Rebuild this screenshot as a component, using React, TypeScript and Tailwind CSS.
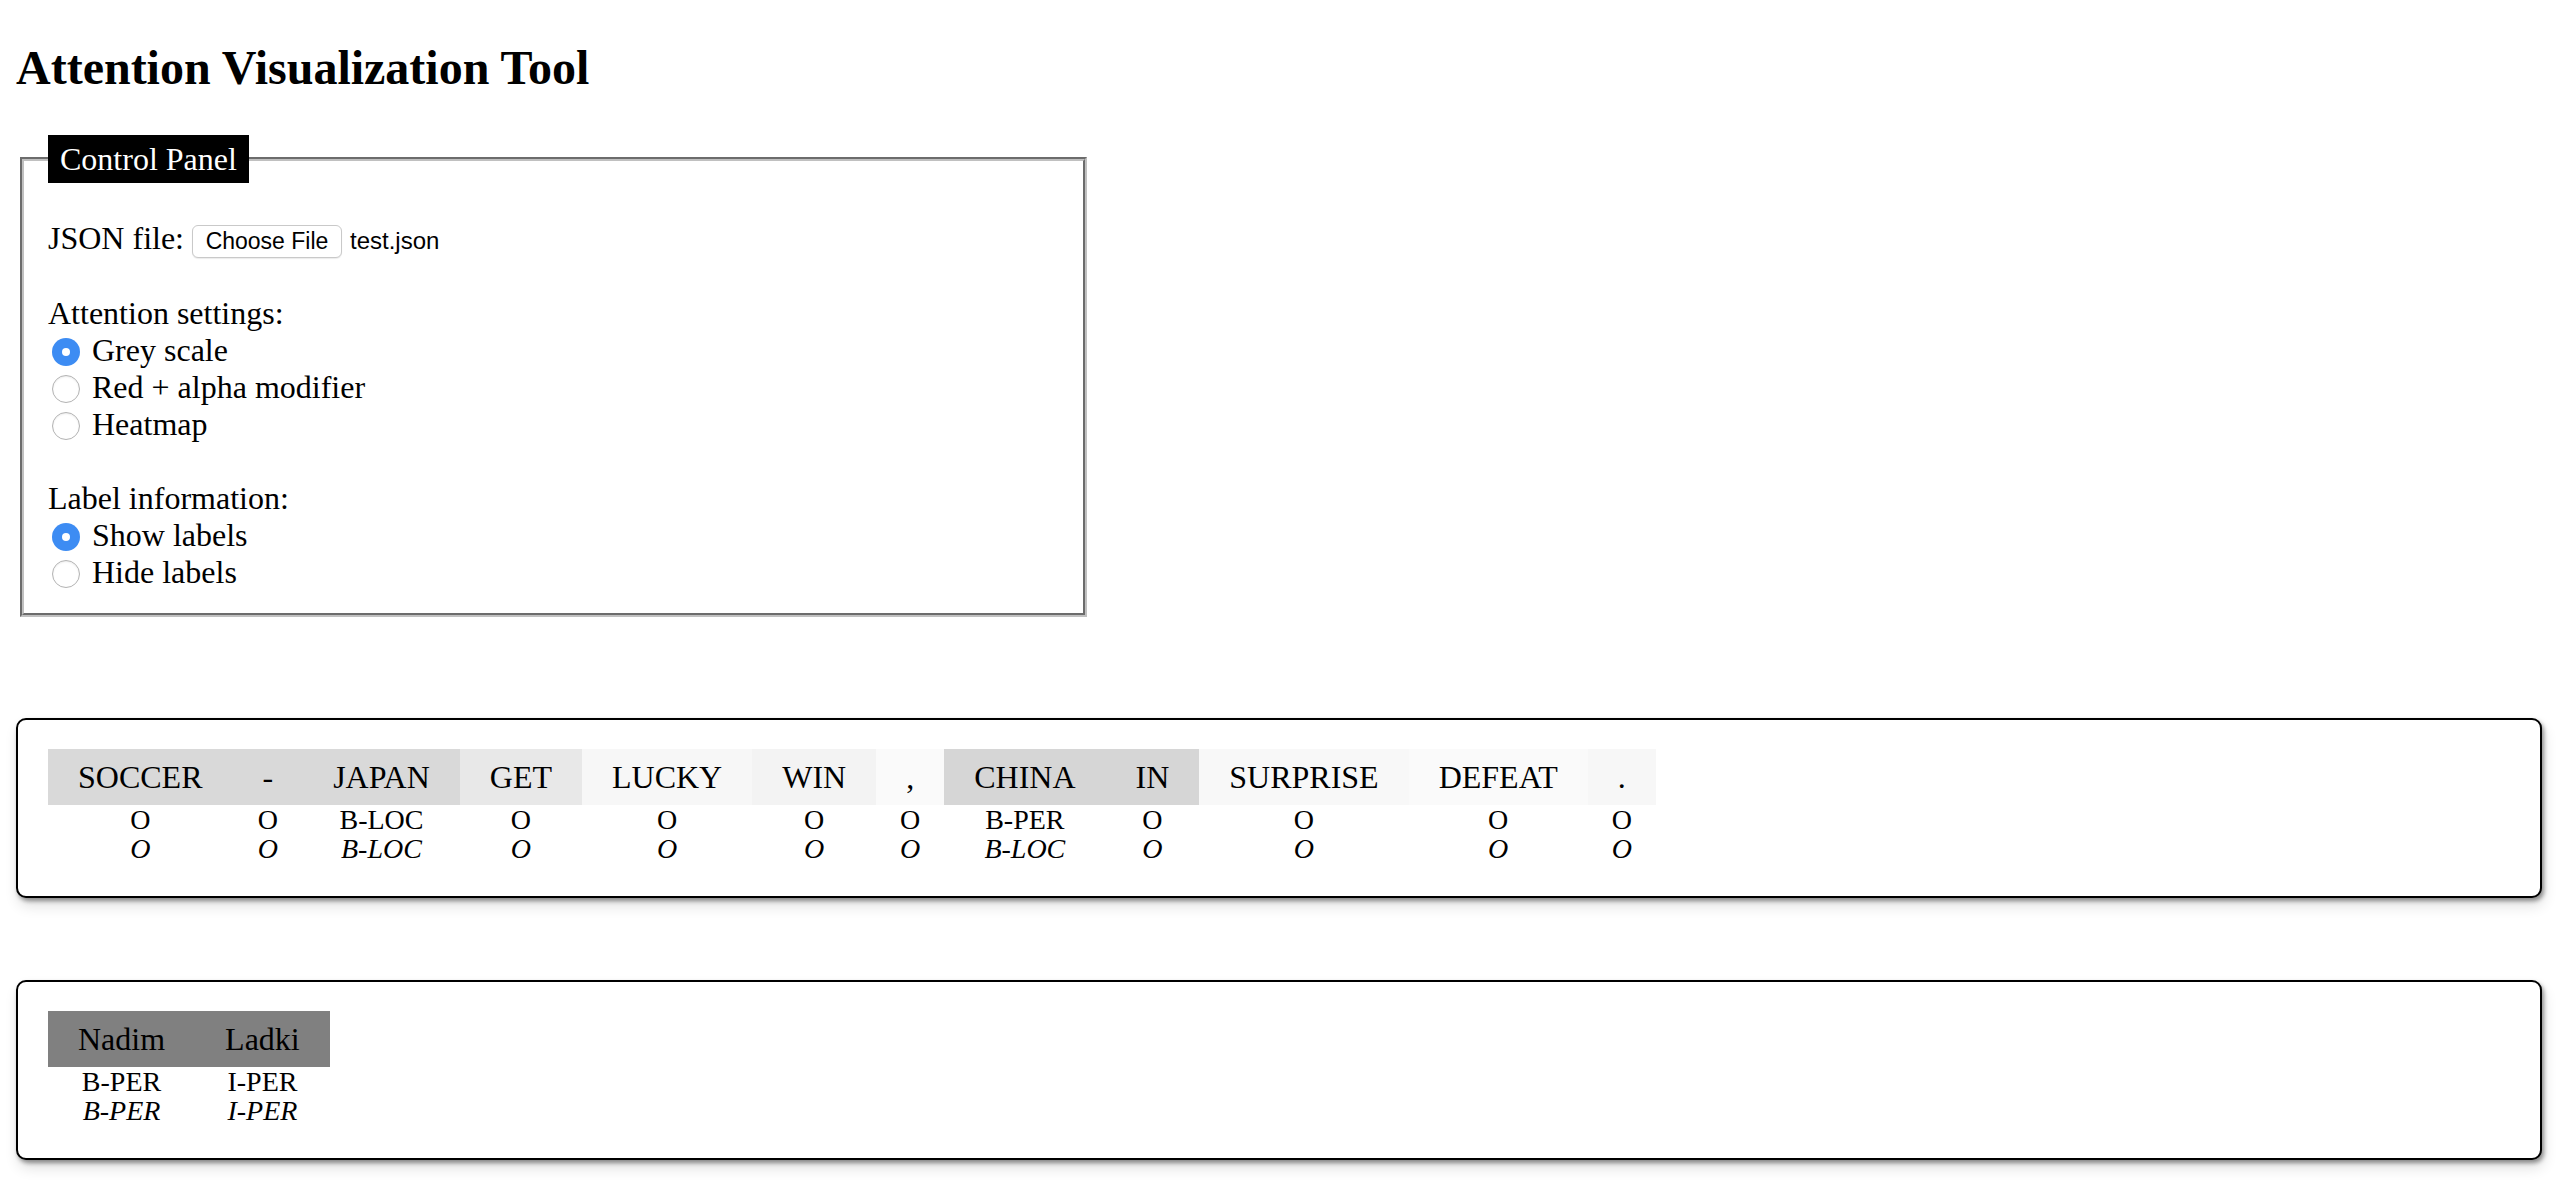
import { useState } from "react";

type Token = { word: string; shade: number; gold: string; pred: string };

const SENTENCES: Token[][] = [
  [
    { word: "SOCCER", shade: 217, gold: "O", pred: "O" },
    { word: "-", shade: 217, gold: "O", pred: "O" },
    { word: "JAPAN", shade: 217, gold: "B-LOC", pred: "B-LOC" },
    { word: "GET", shade: 232, gold: "O", pred: "O" },
    { word: "LUCKY", shade: 247, gold: "O", pred: "O" },
    { word: "WIN", shade: 243, gold: "O", pred: "O" },
    { word: ",", shade: 250, gold: "O", pred: "O" },
    { word: "CHINA", shade: 214, gold: "B-PER", pred: "B-LOC" },
    { word: "IN", shade: 214, gold: "O", pred: "O" },
    { word: "SURPRISE", shade: 248, gold: "O", pred: "O" },
    { word: "DEFEAT", shade: 250, gold: "O", pred: "O" },
    { word: ".", shade: 247, gold: "O", pred: "O" },
  ],
  [
    { word: "Nadim", shade: 128, gold: "B-PER", pred: "B-PER" },
    { word: "Ladki", shade: 128, gold: "I-PER", pred: "I-PER" },
  ],
];

function Radio({ checked, label, onClick }: { checked: boolean; label: string; onClick: () => void }) {
  return (
    <div className="flex h-[37px] cursor-pointer items-start" onClick={onClick}>
      {checked ? (
        <span className="mt-[6px] ml-[4px] flex h-[28px] w-[28px] items-center justify-center rounded-full bg-[#3d8cf3]">
          <span className="h-[8px] w-[8px] rounded-full bg-white" />
        </span>
      ) : (
        <span className="mt-[6px] ml-[4px] h-[28px] w-[28px] rounded-full border-[1.5px] border-[#b3b3b3] bg-white shadow-[inset_0_1px_2px_rgba(0,0,0,0.08)]" />
      )}
      <span className="ml-[12px]">{label}</span>
    </div>
  );
}

function SentenceBox({ tokens, showLabels, className }: { tokens: Token[]; showLabels: boolean; className: string }) {
  return (
    <div
      className={`rounded-[10px] border-2 border-black bg-white pt-[29px] pb-[33px] pl-[30px] shadow-[2px_3px_4px_rgba(0,0,0,0.4),2px_8px_14px_rgba(0,0,0,0.12)] ${className}`}
    >
      <div className="flex">
        {tokens.map((t, i) => (
          <div key={i} className="flex flex-col items-center">
            <div
              className="w-full px-[30px] text-center text-[32px] leading-[56px]"
              style={{ backgroundColor: `rgb(${t.shade}, ${t.shade}, ${t.shade})` }}
            >
              {t.word}
            </div>
            {showLabels && (
              <>
                <div className="text-[28px] leading-[29px]">{t.gold}</div>
                <div className="text-[28px] leading-[29px] italic">{t.pred}</div>
              </>
            )}
          </div>
        ))}
      </div>
    </div>
  );
}

export default function App() {
  const [mode, setMode] = useState<"grey" | "red" | "heat">("grey");
  const [showLabels, setShowLabels] = useState(true);

  return (
    <div className="min-h-screen bg-white px-[16px] font-['Liberation_Serif','Times_New_Roman',serif] text-black">
      <h2 className="pt-[40px] text-[48px] font-bold leading-[55px]">Attention Visualization Tool</h2>

      <fieldset className="mx-[4px] mt-[40px] w-[1067px] border-[4px] border-[#c0c0c0] px-[24px] pt-[37px] pb-[22px] text-[32px] leading-[37px] [border-style:groove]">
        <legend className="bg-black px-[12px] text-[32px] leading-[48px] text-white">Control Panel</legend>

        <div className="flex h-[38px] items-baseline">
          <span>JSON file:</span>
          <label className="ml-[8px] inline-flex h-[33px] w-[150px] cursor-pointer items-center justify-center rounded-[6px] border border-[#c9c9c9] bg-white font-['Liberation_Sans',Arial,sans-serif] text-[23px] leading-none shadow-[0_1px_1px_rgba(0,0,0,0.08)]">
            Choose File
          </label>
          <span className="ml-[8px] font-['Liberation_Sans',Arial,sans-serif] text-[24px]">test.json</span>
        </div>
        <div className="h-[37px]" />

        <div>Attention settings:</div>
        <Radio checked={mode === "grey"} label="Grey scale" onClick={() => setMode("grey")} />
        <Radio checked={mode === "red"} label="Red + alpha modifier" onClick={() => setMode("red")} />
        <Radio checked={mode === "heat"} label="Heatmap" onClick={() => setMode("heat")} />
        <div className="h-[37px]" />

        <div>Label information:</div>
        <Radio checked={showLabels} label="Show labels" onClick={() => setShowLabels(true)} />
        <Radio checked={!showLabels} label="Hide labels" onClick={() => setShowLabels(false)} />
      </fieldset>

      <SentenceBox tokens={SENTENCES[0]} showLabels={showLabels} className="mt-[101px]" />
      <SentenceBox tokens={SENTENCES[1]} showLabels={showLabels} className="mt-[82px]" />
    </div>
  );
}
